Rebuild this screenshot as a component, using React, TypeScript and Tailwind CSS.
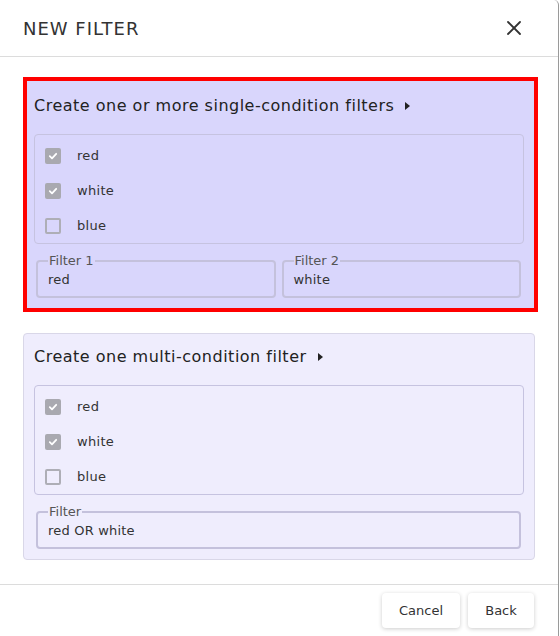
import { useState } from "react";

const font = { fontFamily: '"DejaVu Sans", sans-serif' };

function CheckRow({ label, checked }: { label: string; checked: boolean }) {
  return (
    <div className="flex items-center h-[35px] pl-[10px]">
      <span
        className={`flex items-center justify-center w-4 h-4 rounded-[2px] ${
          checked ? "bg-[#a9a9b0]" : "border-2 border-[#aeaeb6]"
        }`}
      >
        {checked && (
          <svg width="10" height="10" viewBox="0 0 10 10" fill="none" stroke="white" strokeWidth="1.8" strokeLinecap="round" strokeLinejoin="round">
            <polyline points="1.8,5.2 4,7.3 8.2,2.8" />
          </svg>
        )}
      </span>
      <span className="ml-4 text-[13px] tracking-[0.3px] text-[#333]">{label}</span>
    </div>
  );
}

function Field({ legend, value }: { legend: string; value: string }) {
  return (
    <fieldset className="flex-1 border-2 border-[#c4c1dc] rounded-[4px] px-[10px] pt-[3px] pb-[7px] -mt-[7px]">
      <legend className="text-[13px] text-[#555] px-[1px] leading-[14px]">{legend}</legend>
      <div className="text-[13px] tracking-[0.2px] text-[#333] leading-[18px]">{value}</div>
    </fieldset>
  );
}

function Section({
  title,
  highlighted,
  fields,
}: {
  title: string;
  highlighted?: boolean;
  fields: { legend: string; value: string }[];
}) {
  const [items] = useState([
    { label: "red", checked: true },
    { label: "white", checked: true },
    { label: "blue", checked: false },
  ]);
  return (
    <div
      className={
        highlighted
          ? "border-4 border-[#ff0000] bg-[#d9d6fc] pl-[7px] pr-[10px] pb-[10px]"
          : "border border-[#d9d7e8] rounded-[4px] bg-[#efedfd] px-[10px] pb-[10px] mr-[3px]"
      }
    >
      <div
        className={`flex items-center gap-[11px] text-[16px] tracking-[0.5px] text-[#222] ${
          highlighted ? "h-[53px] pb-[3px]" : "h-[51px] pb-[6px]"
        }`}
      >
        <span>{title}</span>
        <svg width="5" height="8" viewBox="0 0 5 8">
          <polygon points="0,0 5,4 0,8" fill="#222" />
        </svg>
      </div>
      <div className="border border-[#c6c3e0] rounded-[4px] pt-[3px] mb-[17px]">
        {items.map((i) => (
          <CheckRow key={i.label} label={i.label} checked={i.checked} />
        ))}
      </div>
      <div className="flex gap-[6px] pl-[2px] pr-[3px]">
        {fields.map((f) => (
          <Field key={f.legend} legend={f.legend} value={f.value} />
        ))}
      </div>
    </div>
  );
}

export default function App() {
  return (
    <div className="w-[560px] h-[636px] bg-white" style={font}>
      <div className="w-[559px] h-full border-r border-[#9a9a9a] rounded-tr-[5px] bg-white flex flex-col">
        <div className="h-[57px] flex items-center justify-between pl-[23px] pr-[36px] border-b border-[#dcdcdc] shrink-0">
          <h1 className="text-[18px] text-[#333] tracking-[1px]">NEW FILTER</h1>
          <svg width="16" height="16" viewBox="0 0 16 16" stroke="#333" strokeWidth="1.8" strokeLinecap="round">
            <line x1="2" y1="2" x2="14" y2="14" />
            <line x1="14" y1="2" x2="2" y2="14" />
          </svg>
        </div>
        <div className="flex-1 pt-[20px] pl-[23px] pr-[20px] flex flex-col gap-[21px]">
          <Section
            highlighted
            title="Create one or more single-condition filters"
            fields={[
              { legend: "Filter 1", value: "red" },
              { legend: "Filter 2", value: "white" },
            ]}
          />
          <Section
            title="Create one multi-condition filter"
            fields={[{ legend: "Filter", value: "red OR white" }]}
          />
        </div>
        <div className="h-[52px] border-t border-[#dcdcdc] flex items-start justify-end gap-[8px] pt-[8px] pr-[24px] shrink-0">
          <button className="h-[35px] w-[78px] rounded-[4px] bg-white text-[13px] text-[#333] shadow-[0_1px_4px_rgba(0,0,0,0.2)]">
            Cancel
          </button>
          <button className="h-[35px] w-[66px] rounded-[4px] bg-white text-[13px] text-[#333] shadow-[0_1px_4px_rgba(0,0,0,0.2)]">
            Back
          </button>
        </div>
      </div>
    </div>
  );
}
